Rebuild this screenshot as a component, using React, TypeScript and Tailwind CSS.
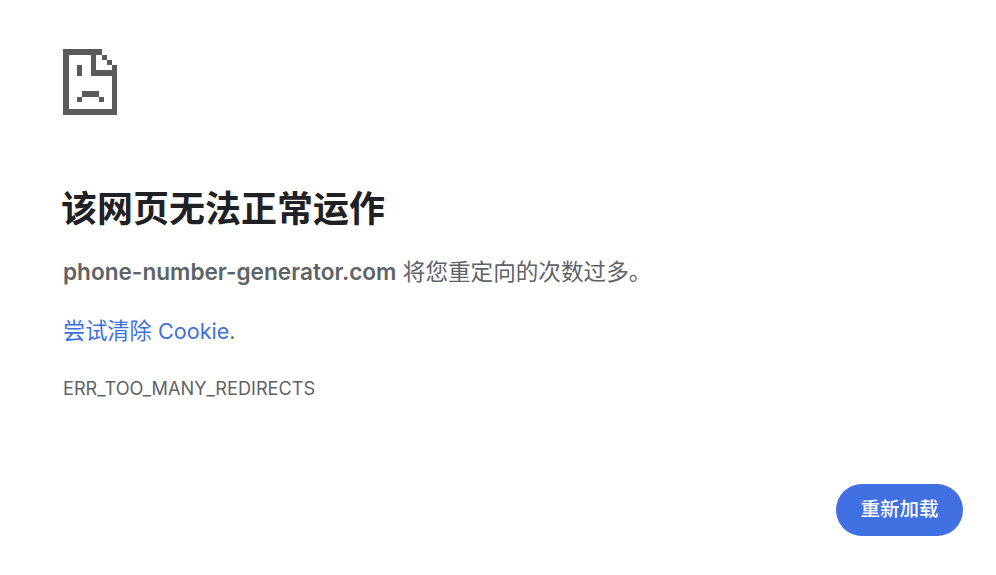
const cjk = "font-['Inter','Noto_Sans_CJK_SC',sans-serif]";

// sad page icon, coordinates measured from the reference at 3x
function SadPageIcon() {
  return (
    <svg width="54" height="66" viewBox="0 0 162 198" fill="#5a5a5a" shapeRendering="crispEdges">
      <rect x="0" y="0" width="117" height="17" />
      <rect x="0" y="0" width="17" height="198" />
      <rect x="0" y="181" width="162" height="17" />
      <rect x="147" y="48" width="15" height="150" />
      <rect x="84" y="0" width="16" height="80" />
      <rect x="84" y="64" width="78" height="16" />
      <rect x="117" y="17" width="15" height="15" />
      <rect x="132" y="32" width="15" height="16" />
      <rect x="42" y="47" width="15" height="33" />
      <rect x="57" y="127" width="50" height="16" />
      <rect x="42" y="143" width="15" height="16" />
      <rect x="107" y="143" width="15" height="16" />
    </svg>
  );
}

export default function App() {
  return (
    <div className={`${cjk} w-[996px] h-[575px] bg-white overflow-hidden flex flex-col pt-[49px] pl-[63px] pr-[33px]`}>
      <SadPageIcon />
      <h1 className="mt-[69px] -ml-[2px] text-[36px] leading-[50px] font-semibold text-[#202124]">该网页无法正常运作</h1>
      <p className="mt-[22px] text-[22.6px] leading-[32px] text-[#5f6368]">
        <span className="font-semibold">phone-number-generator.com</span> 将您重定向的次数过多。
      </p>
      <p className="mt-[27px] text-[22.2px] leading-[32px] text-[#5f6368]">
        <a className="text-[#3e70dd]">尝试清除 <span className="text-[21.6px]">Cookie</span></a><span className="text-[21.6px]">.</span>
      </p>
      <div className="mt-[28px] text-[18.15px] leading-[26px] text-[#5f6368]">ERR_TOO_MANY_REDIRECTS</div>
      <div className="mt-[83px] flex justify-end">
        <button className="w-[127px] h-[52px] rounded-full bg-[#4170e2] text-white text-[19.5px] font-medium">重新加载</button>
      </div>
    </div>
  );
}
